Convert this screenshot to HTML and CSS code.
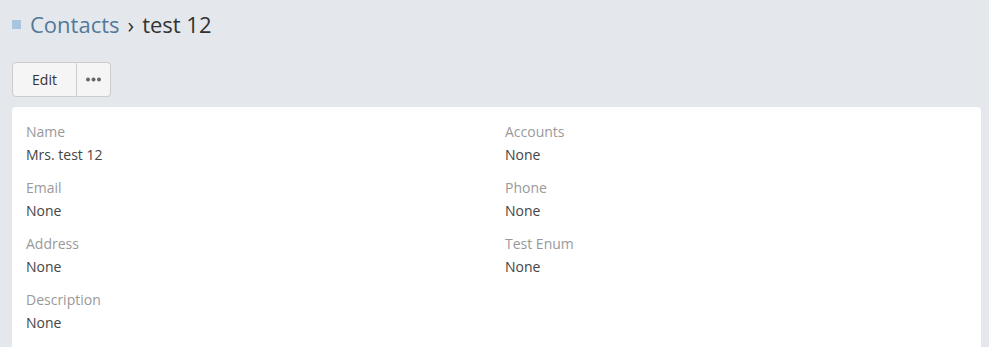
FILE: index.html
```html
<!DOCTYPE html>
<html lang="en">
<head>
    <meta charset="UTF-8">
    <title>Contacts - test 12</title>
    <link rel="stylesheet" href="styles.css">
</head>
<body>
    <div class="page-header">
        <h3 class="breadcrumb">
            <span class="scope-icon"></span>
            <a href="#" class="crumb-link">Contacts</a>
            <span class="crumb-sep">&rsaquo;</span>
            <span class="crumb-current">test 12</span>
        </h3>
    </div>

    <div class="button-row">
        <div class="btn-group">
            <button class="btn btn-edit">Edit</button>
            <button class="btn btn-more">
                <svg width="15" height="5" viewBox="0 0 15 5">
                    <circle cx="2" cy="2.5" r="2" fill="#666"/>
                    <circle cx="7.5" cy="2.5" r="2" fill="#666"/>
                    <circle cx="13" cy="2.5" r="2" fill="#666"/>
                </svg>
            </button>
        </div>
    </div>

    <div class="panel">
        <div class="field-grid">
            <div class="field">
                <div class="field-label">Name</div>
                <div class="field-value">Mrs. test 12</div>
            </div>
            <div class="field">
                <div class="field-label">Accounts</div>
                <div class="field-value">None</div>
            </div>
            <div class="field">
                <div class="field-label">Email</div>
                <div class="field-value">None</div>
            </div>
            <div class="field">
                <div class="field-label">Phone</div>
                <div class="field-value">None</div>
            </div>
            <div class="field">
                <div class="field-label">Address</div>
                <div class="field-value">None</div>
            </div>
            <div class="field">
                <div class="field-label">Test Enum</div>
                <div class="field-value">None</div>
            </div>
            <div class="field">
                <div class="field-label">Description</div>
                <div class="field-value">None</div>
            </div>
        </div>
    </div>
</body>
</html>
```

FILE: styles.css
```css
body {
    margin: 0;
    padding: 0 8px 0 12px;
    background-color: #e4e8ec;
    font-family: "Open Sans", Arial, sans-serif;
    font-size: 14px;
    color: #333;
}
.page-header {
    padding-top: 9px;
    height: 62px;
    box-sizing: border-box;
}
.breadcrumb {
    margin: 0;
    font-size: 22px;
    font-weight: normal;
    line-height: 30px;
    display: flex;
    align-items: center;
}
.scope-icon {
    display: inline-block;
    width: 9px;
    height: 9px;
    background-color: #a8c5df;
    margin-right: 9px;
}
.crumb-link {
    color: #53799a;
    text-decoration: none;
}
.crumb-sep {
    margin: 0 8px;
    color: #333;
}
.crumb-current {
    color: #333;
}
.button-row {
    margin-bottom: 10px;
}
.btn-group {
    display: inline-flex;
}
.btn {
    font-family: inherit;
    font-size: 14px;
    color: #333;
    background-color: #f5f5f5;
    border: 1px solid #ccc;
    height: 35px;
    padding: 0;
    cursor: pointer;
    display: flex;
    align-items: center;
    justify-content: center;
}
.btn-edit {
    width: 65px;
    border-radius: 4px 0 0 4px;
}
.btn-more {
    width: 34px;
    border-left: none;
    border-radius: 0 4px 4px 0;
}
.panel {
    background-color: #fff;
    border-radius: 4px;
    padding: 14px 14px 20px;
}
.field-grid {
    display: grid;
    grid-template-columns: 1fr 1fr;
    column-gap: 17px;
}
.field {
    height: 56px;
}
.field-label {
    color: #999;
    line-height: 22px;
}
.field-value {
    color: #444;
    line-height: 24px;
}
```
